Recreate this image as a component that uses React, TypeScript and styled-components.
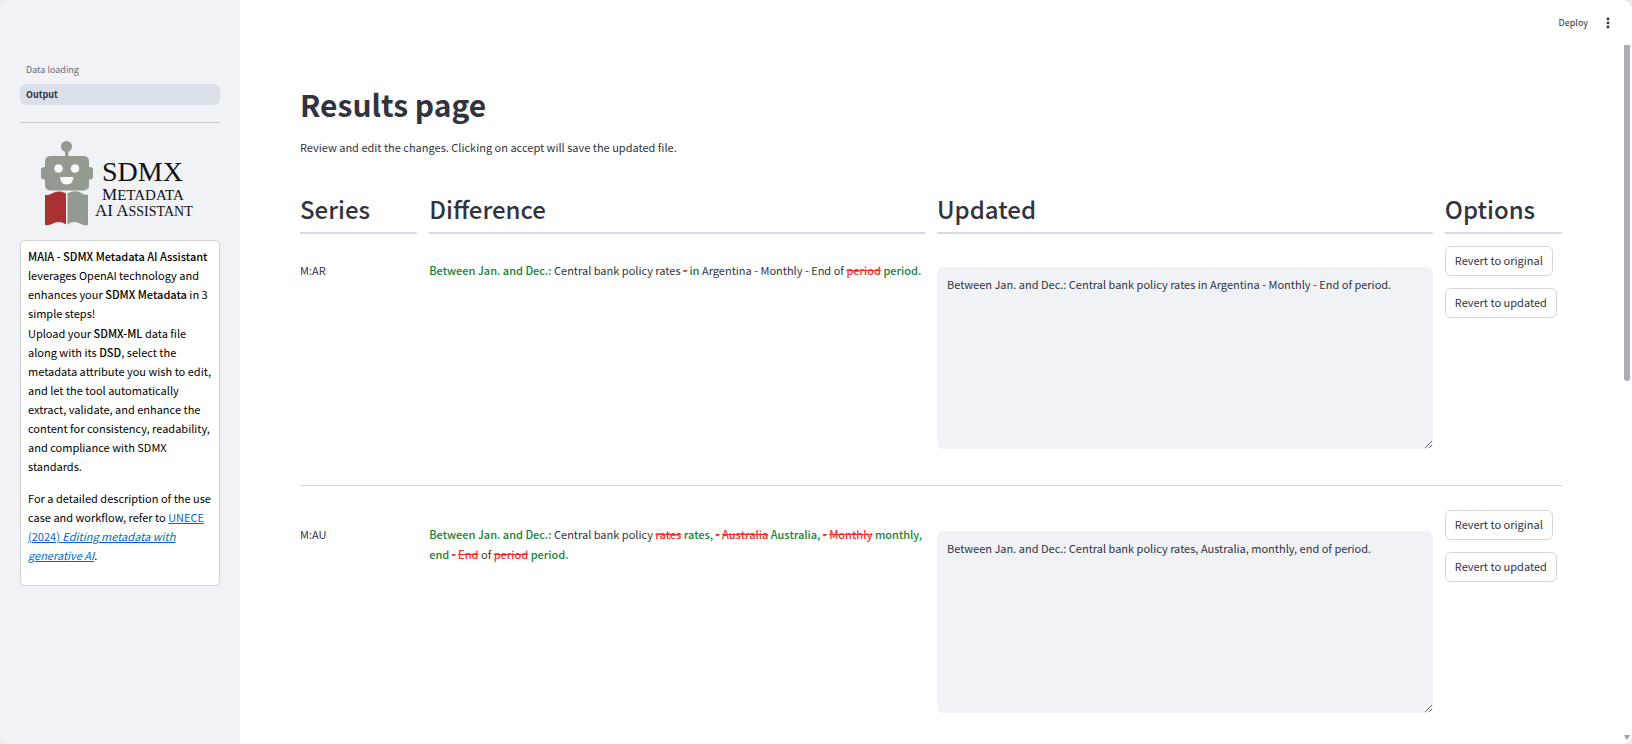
import React from "react";
import styled, { createGlobalStyle } from "styled-components";

const GlobalStyle = createGlobalStyle`
  *, *::before, *::after { box-sizing: border-box; }
  body {
    margin: 0;
    background: #ececef;
    color: #31333f;
    font-family: "Source Sans Pro", "Noto Sans CJK SC", "Noto Sans", sans-serif;
    font-size: 11px;
    line-height: 20px;
  }
  button, textarea { font: inherit; color: inherit; }
  h1, h2, p { margin: 0; }
`;

const Shell = styled.div`
  position: relative;
  display: flex;
  height: 100vh;
  overflow: hidden;
  border-radius: 10px;
  background: #ffffff;
`;

const Sidebar = styled.aside`
  flex: 0 0 240px;
  padding: 59px 20px 0;
  background: #f0f2f6;
`;

const Nav = styled.nav`
  display: flex;
  flex-direction: column;
  gap: 4px;
`;

const NavLink = styled.a<{ $active?: boolean }>`
  padding: 0 6px;
  border-radius: 6px;
  background: ${(p) => (p.$active ? "#dadfea" : "transparent")};
  color: ${(p) => (p.$active ? "#31333f" : "#6c6f80")};
  font-size: 9px;
  font-weight: ${(p) => (p.$active ? 600 : 400)};
  line-height: 21px;
  text-decoration: none;
`;

const SidebarRule = styled.hr`
  margin: 17px 0 18px;
  border: 0;
  border-top: 1px solid #c9cbd1;
`;

const Logo = styled.svg`
  display: block;
  width: 160px;
  height: 86px;
  margin: 0 auto 13px;
`;

const InfoCard = styled.section`
  padding: 6px 4px 20px 7px;
  border: 1px solid #d3d3d3;
  border-radius: 4px;
  background: #ffffff;
  color: #000000;
  line-height: 19px;

  b { font-weight: 500; }
  a { color: #0068c9; }
`;

const InfoText = styled.p<{ $gap?: number }>`
  margin-top: ${(p) => p.$gap ?? 0}px;
`;

const Main = styled.main`
  flex: 1;
  min-width: 0;
`;

const Toolbar = styled.header`
  display: flex;
  align-items: center;
  justify-content: flex-end;
  gap: 12px;
  height: 45px;
  padding-right: 16px;
`;

const ToolButton = styled.button`
  display: flex;
  align-items: center;
  padding: 0;
  border: 0;
  background: none;
  font-size: 9px;
`;

const Content = styled.div`
  padding: 38px 70px 0 60px;
`;

const Title = styled.h1`
  font-size: 30px;
  font-weight: 700;
  line-height: 42px;
`;

const Intro = styled.p`
  margin-top: 12px;
`;

const Columns = styled.div`
  display: grid;
  grid-template-columns:
    minmax(0, 13fr) minmax(0, 55fr) minmax(0, 55fr) minmax(0, 13fr);
  column-gap: 12px;
`;

const HeadingRow = styled(Columns)`
  margin: 34px 0 12px;
`;

const ColumnHeading = styled.h2`
  padding-bottom: 5px;
  border-bottom: 2px solid #d5dae5;
  font-size: 24px;
  font-weight: 500;
  line-height: 36px;
`;

const Row = styled(Columns)`
  & + & {
    border-top: 1px solid #d5d6d8;
    padding-top: 24px;
  }
  padding-bottom: 36px;
`;

const Cell = styled.p`
  padding-top: 14px;
`;

const Added = styled.ins`
  color: #158237;
  font-weight: 500;
  text-decoration: none;
`;

const Removed = styled.del`
  color: #ff2b2b;
  font-weight: 500;
`;

const Editor = styled.textarea`
  display: block;
  width: 100%;
  height: 182px;
  margin-top: 21px;
  padding: 7px 10px;
  border: 0;
  border-radius: 6px;
  outline: 0;
  background: #f0f2f6;
  resize: vertical;
`;

const Options = styled.div`
  display: flex;
  flex-direction: column;
  align-items: flex-start;
  gap: 12px;
`;

const OptionButton = styled.button`
  height: 30px;
  padding: 0 9px 2px;
  border: 1px solid #d6d6d8;
  border-radius: 6px;
  background: #ffffff;
  white-space: nowrap;
`;

const ScrollThumb = styled.div`
  position: absolute;
  top: 45px;
  right: 2px;
  width: 6px;
  height: 336px;
  border-radius: 0 0 3px 3px;
  background: #adadb3;
`;

const ScrollArrow = styled.svg`
  position: absolute;
  right: 2px;
  bottom: 4px;
  width: 6px;
  height: 5px;
`;

type Part = { kind: "same" | "added" | "removed"; text: string };
const same = (text: string): Part => ({ kind: "same", text });
const added = (text: string): Part => ({ kind: "added", text });
const removed = (text: string): Part => ({ kind: "removed", text });

const series = [
  {
    id: "M:AR",
    diff: [
      added("Between Jan. and Dec.:"),
      same("Central bank policy rates"),
      removed("-"),
      added("in"),
      same("Argentina - Monthly - End of"),
      removed("period"),
      added("period."),
    ],
    updated:
      "Between Jan. and Dec.: Central bank policy rates in Argentina - Monthly - End of period.",
  },
  {
    id: "M:AU",
    diff: [
      added("Between Jan. and Dec.:"),
      same("Central bank policy"),
      removed("rates"),
      added("rates,"),
      removed("-"),
      removed("Australia"),
      added("Australia,"),
      removed("-"),
      removed("Monthly"),
      added("monthly, end"),
      removed("-"),
      removed("End"),
      same("of"),
      removed("period"),
      added("period."),
    ],
    updated:
      "Between Jan. and Dec.: Central bank policy rates, Australia, monthly, end of period.",
  },
];

function Diff({ parts }: { parts: Part[] }) {
  return (
    <Cell>
      {parts.map((part, i) => (
        <React.Fragment key={i}>
          {i > 0 && " "}
          {part.kind === "added" && <Added>{part.text}</Added>}
          {part.kind === "removed" && <Removed>{part.text}</Removed>}
          {part.kind === "same" && part.text}
        </React.Fragment>
      ))}
    </Cell>
  );
}

function MaiaLogo() {
  return (
    <Logo viewBox="0 0 160 86" role="img" aria-label="SDMX Metadata AI Assistant">
      <g fill="#929a92">
        <circle cx="26.5" cy="5.5" r="5.5" />
        <rect x="25" y="8" width="3.4" height="10" />
        <rect x="1" y="26" width="52" height="12.5" rx="3" />
        <rect x="5" y="15" width="44" height="34.5" rx="5" />
        <path d="M27.500 52.500C33 49.500 38 49.500 42 52.500Q45 54.500 48 53.500V84Q44 85 41 83Q34 79 27.500 83.500Z" />
      </g>
      <path
        fill="#a83232"
        d="M5 54Q8 54.500 12 52.500C16 50 21 49.500 26 52.500V83.500Q19 79 12 83Q9 84.500 5 84Z"
      />
      <circle cx="18.500" cy="27.500" r="4.300" fill="#f8f9fb" />
      <circle cx="35" cy="27.500" r="4.300" fill="#f8f9fb" />
      <path fill="#f8f9fb" d="M20 36H33.500Q33 43.500 26.700 43.500T20 36Z" />
      <g fill="#111111" fontFamily='"Liberation Serif", serif'>
        <text x="62" y="40" fontSize="28">SDMX</text>
        <text x="62" y="59" fontSize="17">
          M<tspan fontSize="15">ETADATA</tspan>
        </text>
        <text x="55" y="75" fontSize="17">
          AI A<tspan fontSize="14">SSISTANT</tspan>
        </text>
      </g>
    </Logo>
  );
}

export default function App() {
  return (
    <>
      <GlobalStyle />
      <Shell>
        <Sidebar>
          <Nav aria-label="Pages">
            <NavLink href="#loading">Data loading</NavLink>
            <NavLink href="#output" $active aria-current="page">Output</NavLink>
          </Nav>
          <SidebarRule />
          <MaiaLogo />
          <InfoCard>
            <InfoText>
              <b>MAIA - SDMX Metadata AI Assistant</b> leverages OpenAI technology and
              enhances your <b>SDMX Metadata</b> in 3 simple steps!
            </InfoText>
            <InfoText $gap={1}>
              Upload your <b>SDMX-ML</b> data file along with its <b>DSD</b>, select the
              metadata attribute you wish to edit, and let the tool automatically extract,
              validate, and enhance the content for consistency, readability, and
              compliance with SDMX standards.
            </InfoText>
            <InfoText $gap={13}>
              For a detailed description of the use case and workflow, refer to{" "}
              <a href="#unece">UNECE (2024) <i>Editing metadata with generative AI</i></a>.
            </InfoText>
          </InfoCard>
        </Sidebar>
        <Main>
          <Toolbar>
            <ToolButton>Deploy</ToolButton>
            <ToolButton aria-label="Main menu">
              <svg width="16" height="16" viewBox="0 0 16 16" fill="#31333f">
                <circle cx="8" cy="4" r="1.400" />
                <circle cx="8" cy="8" r="1.400" />
                <circle cx="8" cy="12" r="1.400" />
              </svg>
            </ToolButton>
          </Toolbar>
          <Content>
            <Title>Results page</Title>
            <Intro>
              Review and edit the changes. Clicking on accept will save the updated file.
            </Intro>
            <HeadingRow>
              <ColumnHeading>Series</ColumnHeading>
              <ColumnHeading>Difference</ColumnHeading>
              <ColumnHeading>Updated</ColumnHeading>
              <ColumnHeading>Options</ColumnHeading>
            </HeadingRow>
            {series.map((item) => (
              <Row key={item.id}>
                <Cell>{item.id}</Cell>
                <Diff parts={item.diff} />
                <Editor
                  aria-label={`Updated text for ${item.id}`}
                  defaultValue={item.updated}
                  spellCheck={false}
                />
                <Options>
                  <OptionButton>Revert to original</OptionButton>
                  <OptionButton>Revert to updated</OptionButton>
                </Options>
              </Row>
            ))}
          </Content>
        </Main>
        <ScrollThumb aria-hidden="true" />
        <ScrollArrow viewBox="0 0 6 5" aria-hidden="true">
          <path d="M0 0H6L4 4H2Z" fill="#a5a5aa" />
        </ScrollArrow>
      </Shell>
    </>
  );
}
